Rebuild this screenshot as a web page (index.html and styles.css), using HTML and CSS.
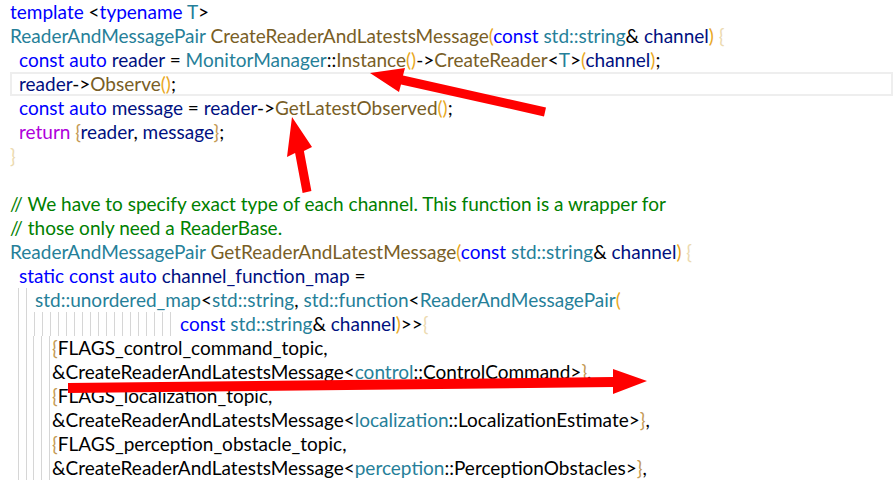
FILE: index.html
```html
<!DOCTYPE html>
<html>
<head>
<meta charset="utf-8">
<link rel="stylesheet" href="styles.css">
</head>
<body>
<div class="editor">
  <div class="line"><span class="code"><span class="k">template</span> &lt;<span class="k">typename</span> <span class="t">T</span>&gt;</span></div>
  <div class="line"><span class="code"><span class="t">ReaderAndMessagePair</span> <span class="f">CreateReaderAndLatestsMessage</span><span class="b1">(</span><span class="k">const</span> <span class="t">std::string</span>&amp; <span class="v">channel</span><span class="b1">)</span> <span class="b2">{</span></span></div>
  <div class="line i1"><span class="code"><span class="k">const</span> <span class="k">auto</span> <span class="v">reader</span> = <span class="t">MonitorManager</span>::<span class="f">Instance</span><span class="b1">()</span>-&gt;<span class="f">CreateReader</span>&lt;<span class="t">T</span>&gt;<span class="b1">(</span><span class="v">channel</span><span class="b1">)</span>;</span></div>
  <div class="line i1 current"><span class="code"><span class="v">reader</span>-&gt;<span class="f">Observe</span><span class="b1">()</span>;</span></div>
  <div class="line i1"><span class="code"><span class="k">const</span> <span class="k">auto</span> <span class="v">message</span> = <span class="v">reader</span>-&gt;<span class="f">GetLatestObserved</span><span class="b1">()</span>;</span></div>
  <div class="line i1"><span class="code"><span class="r">return</span> <span class="b3">{</span><span class="v">reader</span>, <span class="v">message</span><span class="b3">}</span>;</span></div>
  <div class="line"><span class="code"><span class="b2">}</span></span></div>
  <div class="line"><span class="code"> </span></div>
  <div class="line"><span class="code c">// We have to specify exact type of each channel. This function is a wrapper for</span></div>
  <div class="line"><span class="code c">// those only need a ReaderBase.</span></div>
  <div class="line"><span class="code"><span class="t">ReaderAndMessagePair</span> <span class="f">GetReaderAndLatestMessage</span><span class="b1">(</span><span class="k">const</span> <span class="t">std::string</span>&amp; <span class="v">channel</span><span class="b1">)</span> <span class="b2">{</span></span></div>
  <div class="line i1"><span class="code"><span class="k">static</span> <span class="k">const</span> <span class="k">auto</span> <span class="v">channel_function_map</span> =</span></div>
  <div class="line"><span class="sp"></span><span class="g"></span><span class="g w9"></span><span class="code"><span class="t">std::unordered_map</span>&lt;<span class="t">std::string</span>, <span class="t">std::function</span>&lt;<span class="t">ReaderAndMessagePair</span><span class="b1">(</span></span></div>
  <div class="line"><span class="sp"></span><span class="g"></span><span class="g"></span><span class="g"></span><span class="g"></span><span class="g"></span><span class="g"></span><span class="g"></span><span class="g"></span><span class="g"></span><span class="g"></span><span class="g"></span><span class="g"></span><span class="g"></span><span class="g"></span><span class="g"></span><span class="g"></span><span class="g"></span><span class="g"></span><span class="g"></span><span class="g w10"></span><span class="code"><span class="k">const</span> <span class="t">std::string</span>&amp; <span class="v">channel</span><span class="b1">)</span>&gt;&gt;<span class="b2">{</span></span></div>
  <div class="line"><span class="sp"></span><span class="g"></span><span class="g w7"></span><span class="g"></span><span class="g"></span><span class="g w3"></span><span class="code"><span class="b3">{</span><span class="n">FLAGS_control_command_topic</span>,</span></div>
  <div class="line"><span class="sp"></span><span class="g"></span><span class="g w7"></span><span class="g"></span><span class="g"></span><span class="g w3"></span><span class="code">&amp;CreateReaderAndLatestsMessage&lt;<span class="t">control</span>::ControlCommand&gt;<span class="b3">}</span>,</span></div>
  <div class="line"><span class="sp"></span><span class="g"></span><span class="g w7"></span><span class="g"></span><span class="g"></span><span class="g w3"></span><span class="code"><span class="b3">{</span><span class="n">FLAGS_localization_topic</span>,</span></div>
  <div class="line"><span class="sp"></span><span class="g"></span><span class="g w7"></span><span class="g"></span><span class="g"></span><span class="g w3"></span><span class="code">&amp;CreateReaderAndLatestsMessage&lt;<span class="t">localization</span>::LocalizationEstimate&gt;<span class="b3">}</span>,</span></div>
  <div class="line"><span class="sp"></span><span class="g"></span><span class="g w7"></span><span class="g"></span><span class="g"></span><span class="g w3"></span><span class="code"><span class="b3">{</span><span class="n">FLAGS_perception_obstacle_topic</span>,</span></div>
  <div class="line"><span class="sp"></span><span class="g"></span><span class="g w7"></span><span class="g"></span><span class="g"></span><span class="g w3"></span><span class="code">&amp;CreateReaderAndLatestsMessage&lt;<span class="t">perception</span>::PerceptionObstacles&gt;<span class="b3">}</span>,</span></div>
</div>
<svg class="arrows" width="893" height="481" viewBox="0 0 893 481">
  <polygon fill="#ff0000" points="370,73 405,68 403,75.6 546,107.6 544,116.4 401,84.4 399,92"/>
  <polygon fill="#ff0000" points="292,117 312,147 303.9,151.1 311.4,191.1 302.6,192.9 295.1,152.9 287,157"/>
  <polygon fill="#ff0000" points="647,381 613,369 613,377 68,383 68,393 613,387 613,394"/>
</svg>
</body>
</html>
```
FILE: styles.css
```css
html, body {
  margin: 0;
  padding: 0;
  background: #ffffff;
  overflow: hidden;
}
body {
  width: 893px;
  height: 481px;
  position: relative;
}
.editor {
  padding-left: 10px;
  font-family: "Lato", "Noto Sans", sans-serif;
  font-size: 19px;
  color: #000000;
}
.line {
  display: flex;
  height: 24px;
  line-height: 23px;
  box-sizing: border-box;
}
.line.i1 { padding-left: 9px; }
.line.current {
  box-shadow: inset 0 0 0 2px #eeeeee;
}
.code {
  white-space: pre;
}
.sp {
  flex: none;
  width: 8px;
}
.g {
  flex: none;
  width: 8px;
  height: 24px;
  box-sizing: border-box;
  border-left: 1px solid #d6d6d6;
}
.g.w3 { width: 3px; }
.g.w7 { width: 7px; }
.g.w9 { width: 9px; }
.g.w10 { width: 10px; }
.k { color: #0000ff; }
.r { color: #af00db; }
.t { color: #267f99; }
.f { color: #795e26; }
.v { color: #001080; }
.n { color: #000000; }
.c { color: #008000; }
.b1 { color: #e9a81e; }
.b2 { color: #ecdab0; }
.b3 { color: #c49a55; }
.arrows {
  position: absolute;
  top: 0;
  left: 0;
  pointer-events: none;
}
```
